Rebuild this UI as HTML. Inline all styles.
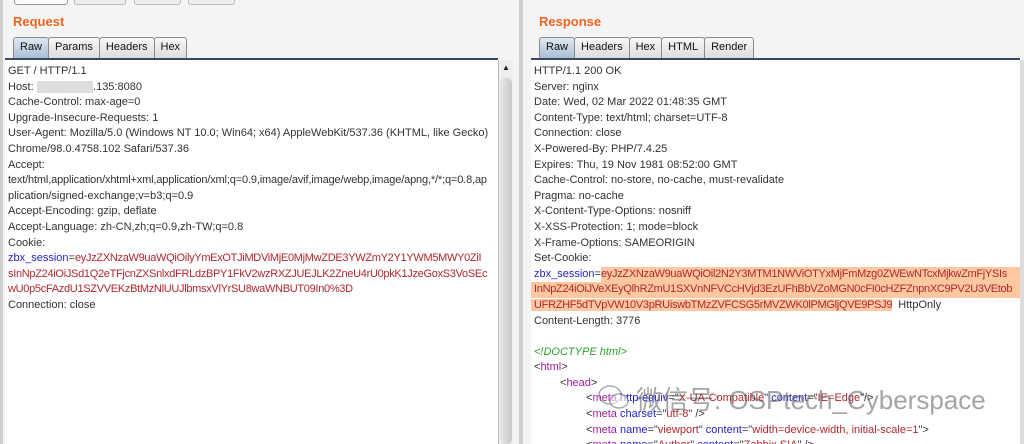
<!DOCTYPE html>
<html><head><style>
body{margin:0;width:1024px;height:444px;background:#f4f4f4;font-family:"Liberation Sans",sans-serif;overflow:hidden;position:relative}
.a{position:absolute}
.title{color:#f06522;font-weight:bold;font-size:13px}
.tabs{display:flex;height:21px}
.tab{border:1px solid #8a8a8a;border-bottom:none;border-radius:3px 3px 0 0;background:linear-gradient(#f8f8f8,#dcdcdc);font-size:11px;padding:3px 6px 0;margin-right:-1px;color:#111}
.tab.on{background:linear-gradient(#dfe8f2,#a9bfd6)}
.box{background:#fff;border-top:2px solid #3a4860;font-size:11px;color:#333;line-height:15.6px;padding:4px 0 0 3px;box-sizing:border-box;white-space:nowrap}
.b{color:#2323c8}.r{color:#b0282e;letter-spacing:-0.3px}.g{color:#2ca02c;font-style:italic}.m{color:#a020a0}
.hl{background:#fdc8a0;color:#b0282e;letter-spacing:-0.3px}
.v{letter-spacing:0}
</style></head><body>
<div class="a" style="left:14px;top:-10px;width:52px;height:13px;border:1px solid #999;border-radius:3px;background:#fafafa"></div>
<div class="a" style="left:74px;top:-10px;width:50px;height:13px;border:1px solid #bbb;border-radius:3px;background:#eee"></div>
<div class="a" style="left:134px;top:-10px;width:45px;height:13px;border:1px solid #bbb;border-radius:3px;background:#eee"></div>
<div class="a" style="left:188px;top:-10px;width:45px;height:13px;border:1px solid #bbb;border-radius:3px;background:#eee"></div>
<div class="a" style="left:0;top:0;width:3px;height:444px;background:#cfcfcf"></div>
<div class="a title" style="left:13px;top:14px">Request</div>
<div class="a tabs" style="left:13px;top:37px"><div class="tab on">Raw</div><div class="tab">Params</div><div class="tab">Headers</div><div class="tab">Hex</div></div>
<div class="a box" style="left:5px;top:58px;width:493px;height:386px;overflow:hidden">
GET / HTTP/1.1<br>Host: <span style="background:#ddd;color:#ddd">S00000000</span>.135:8080<br>Cache-Control: max-age=0<br>Upgrade-Insecure-Requests: 1<br>User-Agent: Mozilla/5.0 (Windows NT 10.0; Win64; x64) AppleWebKit/537.36 (KHTML, like Gecko)<br>Chrome/98.0.4758.102 Safari/537.36<br>Accept:<br><span style="letter-spacing:-0.15px">text/html,application/xhtml+xml,application/xml;q=0.9,image/avif,image/webp,image/apng,*/*;q=0.8,ap</span><br>plication/signed-exchange;v=b3;q=0.9<br>Accept-Encoding: gzip, deflate<br>Accept-Language: zh-CN,zh;q=0.9,zh-TW;q=0.8<br>Cookie:<br><span class="b">zbx_session</span>=<span class="r">eyJzZXNzaW9uaWQiOilyYmExOTJiMDViMjE0MjMwZDE3YWZmY2Y1YWM5MWY0ZiI</span><br><span class="r">sInNpZ24iOiJSd1Q2eTFjcnZXSnlxdFRLdzBPY1FkV2wzRXZJUEJLK2ZneU4rU0pkK1JzeGoxS3VoSEc</span><br><span class="r">wU0p5cFAzdU1SZVVEKzBtMzNlUUJlbmsxVlYrSU8waWNBUT09In0%3D</span><br>Connection: close</div>
<div class="a" style="left:498px;top:60px;width:14px;height:384px;background:#eee;border-left:1px solid #bbb"></div>
<div class="a" style="left:500px;top:78px;width:12px;height:366px;background:linear-gradient(90deg,#e8e8e8,#c8c8c8);border-radius:5px"></div>
<div class="a" style="left:502px;top:63px;font-size:8px;color:#222">▲</div>
<div class="a" style="left:519px;top:0;width:4px;height:444px;background:#d0d0d0"></div>
<div class="a title" style="left:539px;top:14px">Response</div>
<div class="a tabs" style="left:539px;top:37px"><div class="tab on">Raw</div><div class="tab">Headers</div><div class="tab">Hex</div><div class="tab">HTML</div><div class="tab">Render</div></div>
<div class="a box" style="left:531px;top:58px;width:489px;height:386px;overflow:hidden">
HTTP/1.1 200 OK<br>Server: nginx<br>Date: Wed, 02 Mar 2022 01:48:35 GMT<br>Content-Type: text/html; charset=UTF-8<br>Connection: close<br>X-Powered-By: PHP/7.4.25<br>Expires: Thu, 19 Nov 1981 08:52:00 GMT<br>Cache-Control: no-store, no-cache, must-revalidate<br>Pragma: no-cache<br>X-Content-Type-Options: nosniff<br>X-XSS-Protection: 1; mode=block<br>X-Frame-Options: SAMEORIGIN<br>Set-Cookie:<br><span class="b">zbx_session</span>=<span class="hl" style="display:inline-block;width:420px">eyJzZXNzaW9uaWQiOil2N2Y3MTM1NWViOTYxMjFmMzg0ZWEwNTcxMjkwZmFjYSIs</span><br><span class="hl" style="display:inline-block;width:486px;margin-left:-3px;padding-left:3px">InNpZ24iOiJVeXEyQlhRZmU1SXVnNFVCcHVjd3EzUFhBbVZoMGN0cFI0cHZFZnpnXC9PV2U3VEtob</span><br><span class="hl" style="margin-left:-3px;padding-left:3px">UFRZHF5dTVpVW10V3pRUiswbTMzZVFCSG5rMVZWK0lPMGljQVE9PSJ9</span>&nbsp; HttpOnly<br>Content-Length: 3776<br><br><span class="g">&lt;!DOCTYPE html&gt;</span><br>&lt;<span class="m">html</span>&gt;<br><span style="padding-left:26px">&lt;<span class="m">head</span>&gt;</span><br><span style="padding-left:52px">&lt;<span class="m">meta</span> <span class="b">http-equiv</span>=&quot;<span class="r v">X-UA-Compatible</span>&quot; <span class="b">content</span>=&quot;<span class="r v">IE=Edge</span>&quot;/&gt;</span><br><span style="padding-left:52px">&lt;<span class="m">meta</span> <span class="b">charset</span>=&quot;<span class="r v">utf-8</span>&quot; /&gt;</span><br><span style="padding-left:52px">&lt;<span class="m">meta</span> <span class="b">name</span>=&quot;<span class="r v">viewport</span>&quot; <span class="b">content</span>=&quot;<span class="r v">width=device-width, initial-scale=1</span>&quot;&gt;</span><br><span style="padding-left:52px">&lt;<span class="m">meta</span> <span class="b">name</span>=&quot;<span class="r v">Author</span>&quot; <span class="b">content</span>=&quot;<span class="r v">Zabbix SIA</span>&quot; /&gt;</span></div>
<div class="a" style="left:1020px;top:60px;width:4px;height:384px;background:#ddd"></div>
<div class="a" style="left:636px;top:380px;font-size:26px;color:rgba(90,90,90,0.55);font-family:'Liberation Sans','Noto Sans CJK SC',sans-serif;white-space:nowrap">微信号: OSPtech_Cyberspace</div>
<svg class="a" style="left:597px;top:383px" width="34" height="30"><ellipse cx="13" cy="12" rx="11" ry="9" fill="none" stroke="rgba(90,90,90,0.5)" stroke-width="1.5"/><ellipse cx="22" cy="18" rx="9" ry="7" fill="rgba(255,255,255,0.6)" stroke="rgba(90,90,90,0.5)" stroke-width="1.5"/></svg>
</body></html>
